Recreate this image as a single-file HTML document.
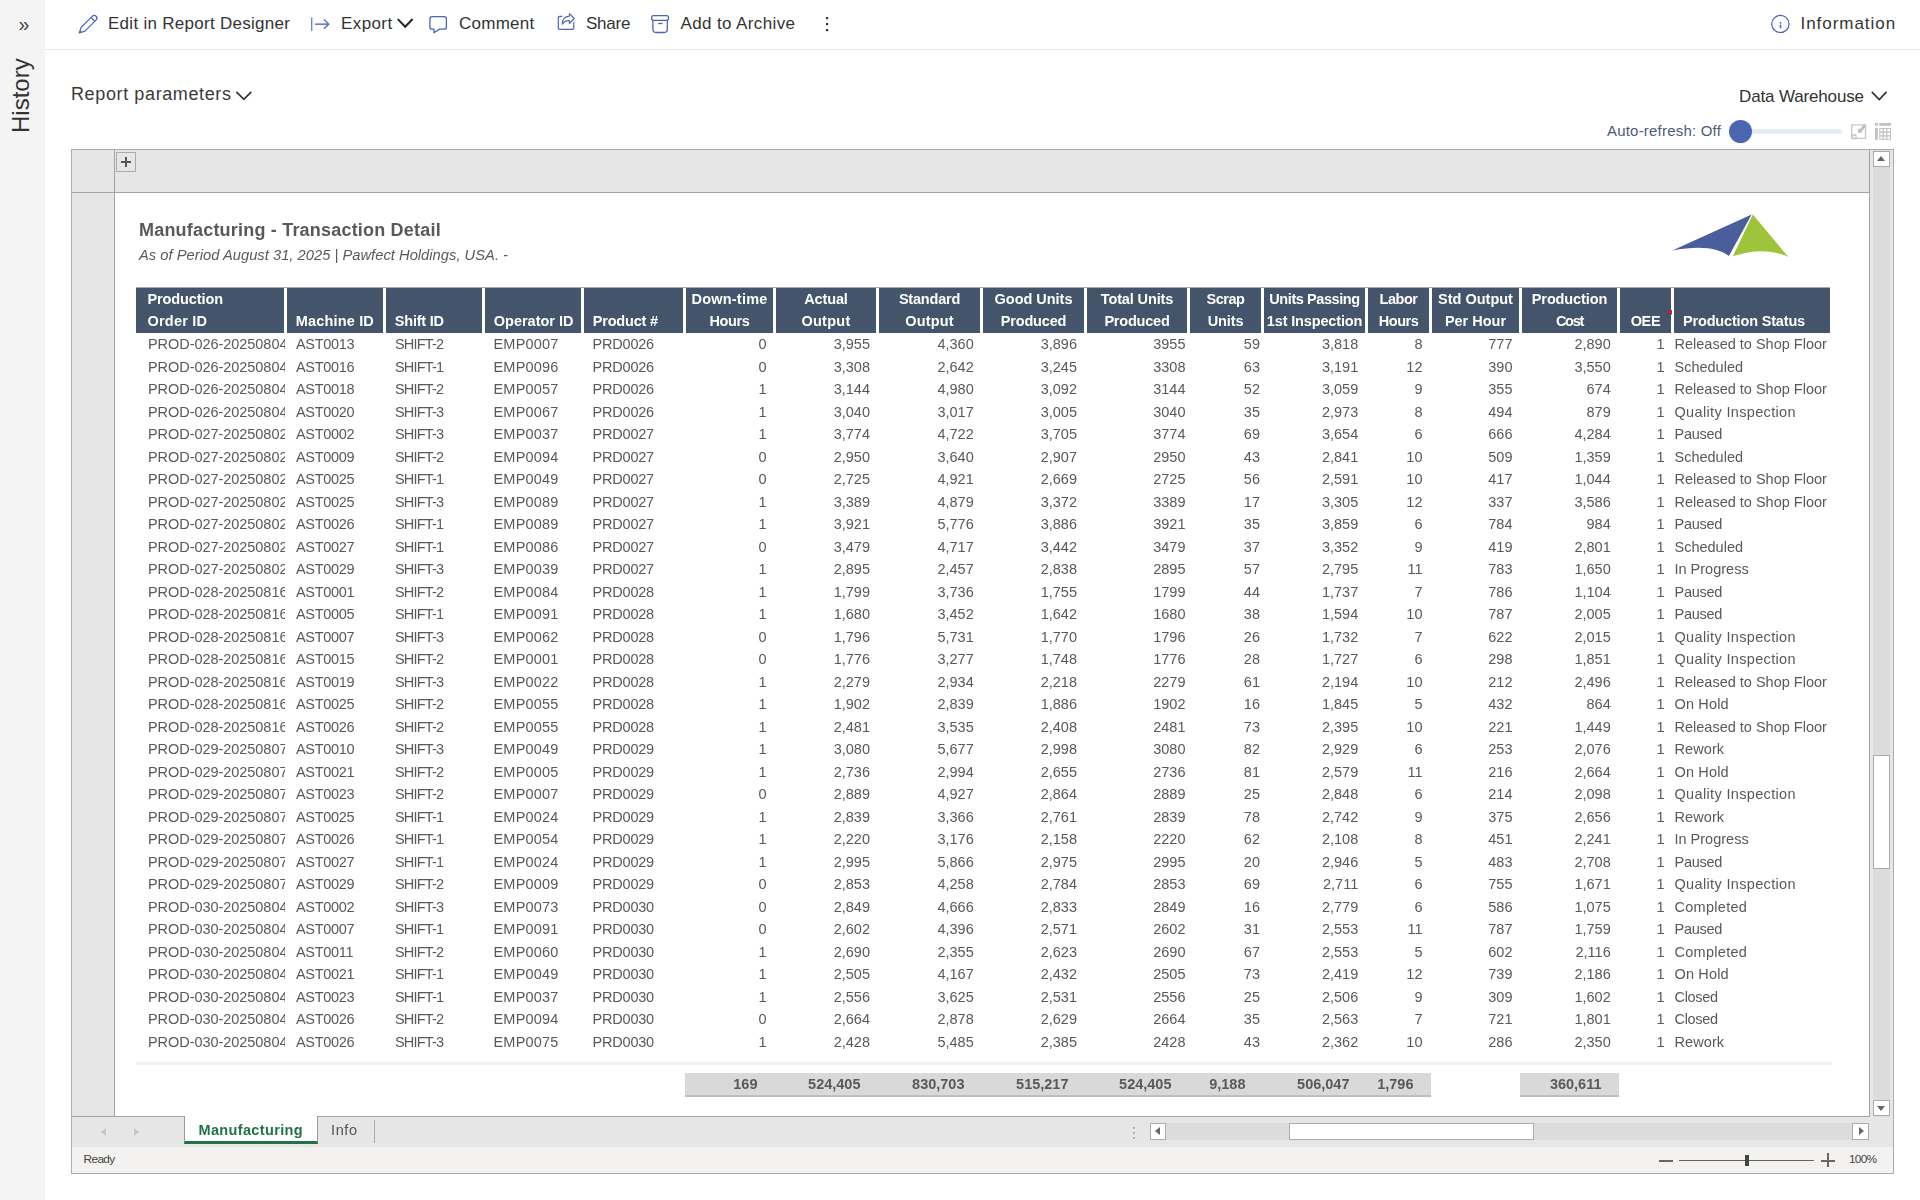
<!DOCTYPE html>
<html lang="en"><head><meta charset="utf-8"><title>Manufacturing - Transaction Detail</title>
<style>
html,body{margin:0;padding:0}
body{width:1920px;height:1200px;overflow:hidden;background:#fff;position:relative;font-family:"Liberation Sans",sans-serif;color:#333}
.abs,#side,#tb,.tx,.ic,#frame div,#frame span,#frame i,.th,.r,.c,.t,#rule,#tot1,#tot2,#thead,#tbody,#totals,.redtri{position:absolute}
#totals{left:0;top:0}
.tx{white-space:nowrap;line-height:1}
#side{left:0;top:0;width:45px;height:1200px;background:#f4f4f4}
#tbline{position:absolute;left:45px;top:49px;width:1875px;height:1px;background:#e9e9e9}
#hist{position:absolute;left:0;top:0;transform-origin:0 0;transform:translate(7.25px,133px) rotate(-90deg);font-size:24px;line-height:28px;white-space:nowrap;color:#333}
/* spreadsheet frame */
#frame{position:absolute;left:71px;top:149px;width:1823px;height:1025px;background:#e6e6e6}
#sheet{left:44px;top:43px;width:1754px;height:924px;background:#fff}
/* table */
#thead{left:0;top:0}
#thead,#tbody,#totals,.gs,#tab1,#tab2{will-change:transform}
.th{top:288px;height:45px;background:#44546a;color:#fff;font-weight:bold;font-size:14.5px;white-space:nowrap;box-sizing:border-box}
.th span{position:absolute;left:0;right:0;line-height:16px}
.h1{top:2.5px}.h2{top:24.5px}
.hc{text-align:center}
.hl{text-align:left}
.r{left:0;height:22px;width:1920px}
.c{top:0;height:22px;line-height:22px;font-size:14.5px;color:#595959;white-space:nowrap;overflow:hidden}
.t{top:1073px;height:22px;line-height:22px;font-size:14.5px;font-weight:bold;color:#595959;text-align:right;padding-right:15.5px;white-space:nowrap}
#rule{left:136px;top:1062px;width:1696px;height:3px;background:#f2f2f2}
#tot1{left:685px;top:1073px;width:746px;height:22px;background:#d9d9d9;border-bottom:2px solid #bfbfbf}
#tot2{left:1520px;top:1073px;width:99px;height:22px;background:#d9d9d9;border-bottom:2px solid #bfbfbf}
.redtri{left:1667px;top:310px;width:0;height:0;border-top:5px solid #e8112d;border-left:5px solid transparent}
/* frame internals (coords relative to frame at 71,149) */
#frame{border:1px solid #ababab;box-sizing:border-box}
#frame>div,#frame>span,#frame>i{position:absolute}
#sheet{left:43px;top:43px;width:1754px;height:923px;background:#fff}
#rowhdr{left:42px;top:0;width:1px;height:967px;background:#a3a3a3}
#colhdrline{left:0;top:42px;width:1798px;height:1px;background:#a3a3a3}
#corner{left:0;top:966px;width:1798px;height:1px;background:#a3a3a3}
#rline{left:1797px;top:0;width:1px;height:967px;background:#a3a3a3}
#plus{left:44px;top:2px;width:20px;height:20px;border:1px solid #ababab;box-sizing:border-box;background:#e6e6e6}
#plus i{position:absolute;left:4px;top:8px;width:10px;height:2px;background:#555}
#plus b{position:absolute;left:8px;top:4px;width:2px;height:10px;background:#555}
#vsb{left:1801px;top:0;width:17px;height:967px;background:#dcdcdc}
.sbtn{position:absolute;width:17px;height:16px;background:#fff;border:1px solid #ababab;box-sizing:border-box}
#vthumb{position:absolute;left:0;top:605px;width:17px;height:114px;background:#fff;border:1px solid #ababab;box-sizing:border-box}
.tri{position:absolute;width:0;height:0}
.tri.up{left:3px;top:4px;border-left:4.5px solid transparent;border-right:4.5px solid transparent;border-bottom:5px solid #666}
.tri.dn{left:3px;top:5px;border-left:4.5px solid transparent;border-right:4.5px solid transparent;border-top:5px solid #666}
.tri.lf{left:4px;top:3px;border-top:4.5px solid transparent;border-bottom:4.5px solid transparent;border-right:5px solid #666}
.tri.rt{left:6px;top:3px;border-top:4.5px solid transparent;border-bottom:4.5px solid transparent;border-left:5px solid #666}
#tabbar{left:0;top:967px;width:1821px;height:30px;background:#e6e6e6}
#tabbar>*{position:absolute}
.nav{width:0;height:0;top:11px;border-top:4px solid transparent;border-bottom:4px solid transparent}
.navl{left:29px;border-right:5px solid #c6c6c6}
.navr{left:62px;border-left:5px solid #c6c6c6}
#tab1{left:112px;top:-1px;width:134px;height:28px;background:#fff;border-left:1px solid #9b9b9b;border-right:1px solid #9b9b9b;border-bottom:3px solid #217346;box-sizing:border-box}
#tab1 span{position:absolute;left:13.5px;top:5.6px;letter-spacing:.35px;font-size:14.5px;font-weight:bold;color:#217346;line-height:16px;white-space:nowrap}
#tab2{left:258.5px;top:4.6px;letter-spacing:.6px;font-size:14.5px;color:#555;line-height:16px}
#tabsep{left:302px;top:3px;width:1px;height:23px;background:#ababab}
.dot{left:1061px;width:2px;height:2px;background:#b0b0b0}
#hsb{left:1078px;top:6px;width:719px;height:17px;background:#dcdcdc}
#hsb .sbtn{width:17px;height:17px}
#hthumb{position:absolute;left:139px;top:0;width:245px;height:17px;background:#fff;border:1px solid #ababab;box-sizing:border-box}
#status{left:0;top:997px;width:1821px;height:26px;background:#f3f2f1}
#status>*{position:absolute}
#zminus{left:1587px;top:13px;width:14px;height:2px;background:#666}
#zline{left:1607px;top:13px;width:135px;height:1px;background:#666}
#zhandle{left:1673px;top:8px;width:4px;height:11px;background:#444}
#zplusH{left:1749px;top:13px;width:14px;height:2px;background:#666}
#zplusV{left:1755px;top:6px;width:2px;height:14px;background:#666}
#hdtop{position:absolute;left:136px;top:287px;width:1694px;height:1px;background:#a2aab5}

.c0{left:136px;width:137px;padding-left:12px;text-align:left;letter-spacing:-0.05px}
.c1{left:287px;width:87px;padding-left:9px;text-align:left;letter-spacing:-0.3px}
.c2{left:386px;width:87px;padding-left:9px;text-align:left;letter-spacing:-0.8px}
.c3{left:485px;width:87.5px;padding-left:8.5px;text-align:left;letter-spacing:0.2px}
.c4{left:584px;width:90.5px;padding-left:8.5px;text-align:left;letter-spacing:-0.2px}
.c5{left:686px;width:80.5px;padding-right:6.5px;text-align:right}
.c6{left:776px;width:94px;padding-right:6px;text-align:right}
.c7{left:879px;width:94.75px;padding-right:6.25px;text-align:right}
.c8{left:983px;width:94px;padding-right:7px;text-align:right}
.c9{left:1087px;width:98.5px;padding-right:1.5px;text-align:right}
.c10{left:1190px;width:70px;padding-right:1px;text-align:right}
.c11{left:1264px;width:94.25px;padding-right:6.75px;text-align:right}
.c12{left:1368px;width:54.5px;padding-right:6.5px;text-align:right}
.c13{left:1432px;width:80.5px;padding-right:6.5px;text-align:right}
.c14{left:1522px;width:88.75px;padding-right:6.25px;text-align:right}
.c15{left:1620px;width:44.5px;padding-right:6.5px;text-align:right}
.c16{left:1674px;width:155.5px;padding-left:0.5px;text-align:left}
</style></head>
<body>

<div id="side"><span class="tx" style="left:18.5px;top:14.5px;font-size:19.5px;color:#444">»</span><div id="hist">History</div></div>
<div id="tbline"></div>
<span class="tx" style="left:108px;top:15px;font-size:17px;letter-spacing:.28px">Edit in Report Designer</span>
<span class="tx" style="left:341px;top:15px;font-size:17px;letter-spacing:.4px">Export</span>
<span class="tx" style="left:459px;top:15px;font-size:17px;letter-spacing:.25px">Comment</span>
<span class="tx" style="left:586px;top:15px;font-size:17px;letter-spacing:-.25px">Share</span>
<span class="tx" style="left:680.5px;top:15px;font-size:17px;letter-spacing:.38px">Add to Archive</span>
<span class="tx" style="left:1800.5px;top:15px;font-size:17px;letter-spacing:.96px">Information</span>
<span class="tx" style="left:71px;top:85px;font-size:18px;letter-spacing:.62px;color:#3a3a3a">Report parameters</span>
<span class="tx" style="left:1739px;top:88px;font-size:17px;letter-spacing:-.15px">Data Warehouse</span>
<span class="tx" style="left:1607px;top:122.5px;font-size:15px;letter-spacing:.2px;color:#4f5b7a">Auto-refresh: Off</span>
<div class="abs" style="position:absolute;left:1752px;top:129px;width:90px;height:5px;background:#e3ecf7;border-radius:0 3px 3px 0"></div>
<div class="abs" style="position:absolute;left:1729px;top:120px;width:23px;height:23px;border-radius:50%;background:#4a66b0"></div>
<div id="frame">
 <div id="sheet"></div>
 <div id="rowhdr"></div>
 <div id="colhdrline"></div>
 <div id="corner"></div>
 <div id="rline"></div>
 <div id="plus"><i></i><b></b></div>
 <div id="vsb"><div class="sbtn" style="left:0;top:1px"><i class="tri up"></i></div><div id="vthumb"></div><div class="sbtn" style="left:0;top:950px"><i class="tri dn"></i></div></div>
 <div id="tabbar">
  <i class="nav navl"></i><i class="nav navr"></i>
  <div id="tab1"><span>Manufacturing</span></div>
  <span id="tab2">Info</span><i id="tabsep"></i>
  <i class="dot" style="top:10px"></i><i class="dot" style="top:15px"></i><i class="dot" style="top:20px"></i>
  <div id="hsb"><div class="sbtn" style="left:0;top:0;width:16px"><i class="tri lf"></i></div><div id="hthumb"></div><div class="sbtn" style="left:702px;top:0"><i class="tri rt"></i></div></div>
 </div>
 <div id="status"><span class="tx" style="left:11.5px;top:7px;font-size:11.8px;letter-spacing:-.6px;color:#444">Ready</span>
  <i id="zminus"></i><i id="zline"></i><i id="zhandle"></i><i id="zplusH"></i><i id="zplusV"></i>
  <span class="tx" style="left:1777px;top:7px;font-size:11.8px;letter-spacing:-.7px;color:#444">100%</span>
 </div>
</div>
<span class="tx gs" style="left:138.6px;top:220.5px;font-size:18px;letter-spacing:.2px;font-weight:bold;color:#595959">Manufacturing - Transaction Detail</span>
<span class="tx gs" style="left:139px;top:247.5px;font-size:14.7px;letter-spacing:.03px;font-style:italic;color:#595959">As of Period August 31, 2025 | Pawfect Holdings, USA. -</span>

<svg id="icons" width="1920" height="1200" viewBox="0 0 1920 1200" style="position:absolute;left:0;top:0;pointer-events:none" fill="none" stroke-linecap="butt" stroke-linejoin="round">
 <!-- pencil -->
 <g stroke="#4a66b8" stroke-width="1.25">
  <path d="M79.3 32.8 L81.3 27.1 L92.5 16.1 A2.7 2.7 0 0 1 96.3 19.9 L84.9 31.1 Z"/>
  <path d="M91 17.5 L94.8 21.3"/>
  <path d="M79.5 32.6 L80.2 30.6 L81.6 32 Z" fill="#4a66b8" stroke="none"/>
 </g>
 <!-- export -->
 <g stroke="#4a66b8" stroke-width="1.35">
  <path d="M311.7 17.4 V30.8" stroke="#6a82c4"/>
  <path d="M314.9 24.15 H328.4"/>
  <path d="M324 19.4 L328.7 24.15 L324 28.8" stroke-linejoin="miter"/>
 </g>
 <!-- chevrons -->
 <path d="M397.8 19.1 L405.2 26.7 L412.6 19" stroke="#222" stroke-width="2" stroke-linejoin="miter"/>
 <path d="M236.4 91.9 L243.8 99.4 L251.3 91.8" stroke="#333" stroke-width="1.7" stroke-linejoin="miter"/>
 <path d="M1871.8 91.9 L1879.3 99.5 L1886.5 91.9" stroke="#333" stroke-width="1.7" stroke-linejoin="miter"/>
 <!-- comment -->
 <path d="M432.1 16.7 H444.2 A2.2 2.2 0 0 1 446.4 18.9 V26.9 A2.2 2.2 0 0 1 444.2 29.1 H439.6 L433.9 32.7 V29.1 H432.1 A2.2 2.2 0 0 1 429.9 26.9 V18.9 A2.2 2.2 0 0 1 432.1 16.7 Z" stroke="#4a66b8" stroke-width="1.3"/>
 <!-- share -->
 <g stroke="#4a66b8" stroke-width="1.2">
  <path d="M562.3 16.4 H559.6 A1.3 1.3 0 0 0 558.3 17.7 V28.1 A1.3 1.3 0 0 0 559.6 29.4 H572.5 A1.3 1.3 0 0 0 573.8 28.1 V22.2"/>
  <path d="M569.4 13.7 L574.3 18.5 L569.4 23.5 V20.6 C566 20.4 563.8 21.6 562.3 24.2 C562.3 19.6 565 16.4 569.4 16.1 Z" stroke-width="1.1"/>
 </g>
 <!-- archive -->
 <g stroke="#4a66b8" stroke-width="1.3">
  <rect x="651.6" y="15.7" width="16.9" height="4.6" rx="2"/>
  <path d="M652.9 20.3 V29.3 A3.2 3.2 0 0 0 656.1 32.5 H664.1 A3.2 3.2 0 0 0 667.3 29.3 V20.3"/>
  <path d="M658.2 23.5 H662.6"/>
 </g>
 <!-- more -->
 <g fill="#333" stroke="none"><rect x="826" y="17" width="2.2" height="2.2"/><rect x="826" y="23" width="2.2" height="2.2"/><rect x="826" y="29" width="2.2" height="2.2"/></g>
 <!-- info -->
 <circle cx="1780.4" cy="23.9" r="8.6" stroke="#4a66b8" stroke-width="1.2"/>
 <g fill="#4a66b8" stroke="none"><rect x="1779.8" y="22.1" width="1.5" height="1.6"/><rect x="1779.8" y="24.6" width="1.5" height="3.6"/></g>
 <!-- shrink icon -->
 <g stroke="#c6c6c6" stroke-width="1.3">
  <rect x="1851.8" y="124.8" width="13.8" height="13.6"/>
  <rect x="1852.5" y="135" width="3.5" height="3.5" fill="#fff"/>
  <path d="M1856.8 134.2 H1858" stroke="#fff" stroke-width="2"/>
 </g>
 <path d="M1858 128 L1858 132.8 L1862.8 132.8 L1861.4 131.4 L1865.6 127.2 L1865.6 124.9 L1863.4 124.9 L1859.4 129.4 Z" fill="#c0c0c0" stroke="none"/>
 <!-- table icon -->
 <g fill="#c0c0c0" stroke="none">
  <rect x="1875" y="123" width="2.8" height="2.8"/><rect x="1875" y="127.9" width="2.8" height="11.9"/>
  <rect x="1879.3" y="123" width="11.7" height="2.8"/>
  <path fill-rule="evenodd" d="M1879.3 127.9 H1891 V139.8 H1879.3 Z M1880.3 128.9 V131.6 H1882.6 V128.9 Z M1883.8 128.9 V131.6 H1886.2 V128.9 Z M1887.4 128.9 V131.6 H1890 V128.9 Z M1880.3 132.7 V135.3 H1882.6 V132.7 Z M1883.8 132.7 V135.3 H1886.2 V132.7 Z M1887.4 132.7 V135.3 H1890 V132.7 Z M1880.3 136.4 V138.8 H1882.6 V136.4 Z M1883.8 136.4 V138.8 H1886.2 V136.4 Z M1887.4 136.4 V138.8 H1890 V136.4 Z"/>
 </g>
 <!-- logo -->
 <path d="M1672.3 250.6 L1751.6 214.4 L1728.9 256 C1719 248 1700 245 1672.3 250.6 Z" fill="#4a5e9c" stroke="none"/>
 <path d="M1752.8 214.6 L1788.3 256.9 C1772 249.5 1752 249.5 1732.8 256.4 Z" fill="#9dc43a" stroke="none"/>
</svg>

<div id="thead"><div id="hdtop"></div>
<div class="th hl" style="left:136px;width:148px"><span class="h1" style="padding-left:11.5px;letter-spacing:-0.11px">Production</span><span class="h2" style="padding-left:11.5px;letter-spacing:0.2px">Order ID</span></div>
<div class="th hl" style="left:287px;width:96px"><span class="h2" style="padding-left:8.75px;letter-spacing:0.17px">Machine ID</span></div>
<div class="th hl" style="left:386px;width:96px"><span class="h2" style="padding-left:8.75px;letter-spacing:-0.2px">Shift ID</span></div>
<div class="th hl" style="left:485px;width:96px"><span class="h2" style="padding-left:8.75px">Operator ID</span></div>
<div class="th hl" style="left:584px;width:99px"><span class="h2" style="padding-left:8.75px;letter-spacing:-0.19px">Product #</span></div>
<div class="th hc" style="left:686px;width:87px"><span class="h1" style="letter-spacing:0.22px">Down-time</span><span class="h2" style="letter-spacing:-0.38px">Hours</span></div>
<div class="th hc" style="left:776px;width:100px"><span class="h1" style="letter-spacing:-0.15px">Actual</span><span class="h2" style="letter-spacing:0.25px">Output</span></div>
<div class="th hc" style="left:879px;width:101px"><span class="h1" style="letter-spacing:-0.21px">Standard</span><span class="h2" style="letter-spacing:0.15px">Output</span></div>
<div class="th hc" style="left:983px;width:101px"><span class="h1" style="letter-spacing:-0.02px">Good Units</span><span class="h2" style="letter-spacing:-0.16px">Produced</span></div>
<div class="th hc" style="left:1087px;width:100px"><span class="h1" style="letter-spacing:-0.12px">Total Units</span><span class="h2" style="letter-spacing:-0.21px">Produced</span></div>
<div class="th hc" style="left:1190px;width:71px"><span class="h1" style="letter-spacing:-0.5px">Scrap</span><span class="h2" style="letter-spacing:-0.12px">Units</span></div>
<div class="th hc" style="left:1264px;width:101px"><span class="h1" style="letter-spacing:-0.42px">Units Passing</span><span class="h2" style="letter-spacing:-0.15px">1st Inspection</span></div>
<div class="th hc" style="left:1368px;width:61px"><span class="h1" style="letter-spacing:-0.5px">Labor</span><span class="h2" style="letter-spacing:-0.5px">Hours</span></div>
<div class="th hc" style="left:1432px;width:87px"><span class="h1">Std Output</span><span class="h2">Per Hour</span></div>
<div class="th hc" style="left:1522px;width:95px"><span class="h1" style="letter-spacing:-0.11px">Production</span><span class="h2" style="letter-spacing:-1.25px">Cost</span></div>
<div class="th hc" style="left:1620px;width:51px"><span class="h2" style="letter-spacing:-0.3px">OEE</span></div>
<div class="th hl" style="left:1674px;width:156px"><span class="h2" style="padding-left:9px;letter-spacing:-0.17px">Production Status</span></div>
<i class="redtri"></i></div>

<div id="tbody">
<div class="r" style="top:333px"><span class="c c0">PROD-026-20250804</span><span class="c c1">AST0013</span><span class="c c2">SHIFT-2</span><span class="c c3">EMP0007</span><span class="c c4">PRD0026</span><span class="c c5">0</span><span class="c c6">3,955</span><span class="c c7">4,360</span><span class="c c8">3,896</span><span class="c c9">3955</span><span class="c c10">59</span><span class="c c11">3,818</span><span class="c c12">8</span><span class="c c13">777</span><span class="c c14">2,890</span><span class="c c15">1</span><span class="c c16">Released to Shop Floor</span></div>
<div class="r" style="top:356px"><span class="c c0">PROD-026-20250804</span><span class="c c1">AST0016</span><span class="c c2">SHIFT-1</span><span class="c c3">EMP0096</span><span class="c c4">PRD0026</span><span class="c c5">0</span><span class="c c6">3,308</span><span class="c c7">2,642</span><span class="c c8">3,245</span><span class="c c9">3308</span><span class="c c10">63</span><span class="c c11">3,191</span><span class="c c12">12</span><span class="c c13">390</span><span class="c c14">3,550</span><span class="c c15">1</span><span class="c c16">Scheduled</span></div>
<div class="r" style="top:378px"><span class="c c0">PROD-026-20250804</span><span class="c c1">AST0018</span><span class="c c2">SHIFT-2</span><span class="c c3">EMP0057</span><span class="c c4">PRD0026</span><span class="c c5">1</span><span class="c c6">3,144</span><span class="c c7">4,980</span><span class="c c8">3,092</span><span class="c c9">3144</span><span class="c c10">52</span><span class="c c11">3,059</span><span class="c c12">9</span><span class="c c13">355</span><span class="c c14">674</span><span class="c c15">1</span><span class="c c16">Released to Shop Floor</span></div>
<div class="r" style="top:401px"><span class="c c0">PROD-026-20250804</span><span class="c c1">AST0020</span><span class="c c2">SHIFT-3</span><span class="c c3">EMP0067</span><span class="c c4">PRD0026</span><span class="c c5">1</span><span class="c c6">3,040</span><span class="c c7">3,017</span><span class="c c8">3,005</span><span class="c c9">3040</span><span class="c c10">35</span><span class="c c11">2,973</span><span class="c c12">8</span><span class="c c13">494</span><span class="c c14">879</span><span class="c c15">1</span><span class="c c16" style="letter-spacing:0.34px">Quality Inspection</span></div>
<div class="r" style="top:423px"><span class="c c0">PROD-027-20250802</span><span class="c c1">AST0002</span><span class="c c2">SHIFT-3</span><span class="c c3">EMP0037</span><span class="c c4">PRD0027</span><span class="c c5">1</span><span class="c c6">3,774</span><span class="c c7">4,722</span><span class="c c8">3,705</span><span class="c c9">3774</span><span class="c c10">69</span><span class="c c11">3,654</span><span class="c c12">6</span><span class="c c13">666</span><span class="c c14">4,284</span><span class="c c15">1</span><span class="c c16" style="letter-spacing:-0.26px">Paused</span></div>
<div class="r" style="top:446px"><span class="c c0">PROD-027-20250802</span><span class="c c1">AST0009</span><span class="c c2">SHIFT-2</span><span class="c c3">EMP0094</span><span class="c c4">PRD0027</span><span class="c c5">0</span><span class="c c6">2,950</span><span class="c c7">3,640</span><span class="c c8">2,907</span><span class="c c9">2950</span><span class="c c10">43</span><span class="c c11">2,841</span><span class="c c12">10</span><span class="c c13">509</span><span class="c c14">1,359</span><span class="c c15">1</span><span class="c c16">Scheduled</span></div>
<div class="r" style="top:468px"><span class="c c0">PROD-027-20250802</span><span class="c c1">AST0025</span><span class="c c2">SHIFT-1</span><span class="c c3">EMP0049</span><span class="c c4">PRD0027</span><span class="c c5">0</span><span class="c c6">2,725</span><span class="c c7">4,921</span><span class="c c8">2,669</span><span class="c c9">2725</span><span class="c c10">56</span><span class="c c11">2,591</span><span class="c c12">10</span><span class="c c13">417</span><span class="c c14">1,044</span><span class="c c15">1</span><span class="c c16">Released to Shop Floor</span></div>
<div class="r" style="top:491px"><span class="c c0">PROD-027-20250802</span><span class="c c1">AST0025</span><span class="c c2">SHIFT-3</span><span class="c c3">EMP0089</span><span class="c c4">PRD0027</span><span class="c c5">1</span><span class="c c6">3,389</span><span class="c c7">4,879</span><span class="c c8">3,372</span><span class="c c9">3389</span><span class="c c10">17</span><span class="c c11">3,305</span><span class="c c12">12</span><span class="c c13">337</span><span class="c c14">3,586</span><span class="c c15">1</span><span class="c c16">Released to Shop Floor</span></div>
<div class="r" style="top:513px"><span class="c c0">PROD-027-20250802</span><span class="c c1">AST0026</span><span class="c c2">SHIFT-1</span><span class="c c3">EMP0089</span><span class="c c4">PRD0027</span><span class="c c5">1</span><span class="c c6">3,921</span><span class="c c7">5,776</span><span class="c c8">3,886</span><span class="c c9">3921</span><span class="c c10">35</span><span class="c c11">3,859</span><span class="c c12">6</span><span class="c c13">784</span><span class="c c14">984</span><span class="c c15">1</span><span class="c c16" style="letter-spacing:-0.26px">Paused</span></div>
<div class="r" style="top:536px"><span class="c c0">PROD-027-20250802</span><span class="c c1">AST0027</span><span class="c c2">SHIFT-1</span><span class="c c3">EMP0086</span><span class="c c4">PRD0027</span><span class="c c5">0</span><span class="c c6">3,479</span><span class="c c7">4,717</span><span class="c c8">3,442</span><span class="c c9">3479</span><span class="c c10">37</span><span class="c c11">3,352</span><span class="c c12">9</span><span class="c c13">419</span><span class="c c14">2,801</span><span class="c c15">1</span><span class="c c16">Scheduled</span></div>
<div class="r" style="top:558px"><span class="c c0">PROD-027-20250802</span><span class="c c1">AST0029</span><span class="c c2">SHIFT-3</span><span class="c c3">EMP0039</span><span class="c c4">PRD0027</span><span class="c c5">1</span><span class="c c6">2,895</span><span class="c c7">2,457</span><span class="c c8">2,838</span><span class="c c9">2895</span><span class="c c10">57</span><span class="c c11">2,795</span><span class="c c12">11</span><span class="c c13">783</span><span class="c c14">1,650</span><span class="c c15">1</span><span class="c c16">In Progress</span></div>
<div class="r" style="top:581px"><span class="c c0">PROD-028-20250816</span><span class="c c1">AST0001</span><span class="c c2">SHIFT-2</span><span class="c c3">EMP0084</span><span class="c c4">PRD0028</span><span class="c c5">1</span><span class="c c6">1,799</span><span class="c c7">3,736</span><span class="c c8">1,755</span><span class="c c9">1799</span><span class="c c10">44</span><span class="c c11">1,737</span><span class="c c12">7</span><span class="c c13">786</span><span class="c c14">1,104</span><span class="c c15">1</span><span class="c c16" style="letter-spacing:-0.26px">Paused</span></div>
<div class="r" style="top:603px"><span class="c c0">PROD-028-20250816</span><span class="c c1">AST0005</span><span class="c c2">SHIFT-1</span><span class="c c3">EMP0091</span><span class="c c4">PRD0028</span><span class="c c5">1</span><span class="c c6">1,680</span><span class="c c7">3,452</span><span class="c c8">1,642</span><span class="c c9">1680</span><span class="c c10">38</span><span class="c c11">1,594</span><span class="c c12">10</span><span class="c c13">787</span><span class="c c14">2,005</span><span class="c c15">1</span><span class="c c16" style="letter-spacing:-0.26px">Paused</span></div>
<div class="r" style="top:626px"><span class="c c0">PROD-028-20250816</span><span class="c c1">AST0007</span><span class="c c2">SHIFT-3</span><span class="c c3">EMP0062</span><span class="c c4">PRD0028</span><span class="c c5">0</span><span class="c c6">1,796</span><span class="c c7">5,731</span><span class="c c8">1,770</span><span class="c c9">1796</span><span class="c c10">26</span><span class="c c11">1,732</span><span class="c c12">7</span><span class="c c13">622</span><span class="c c14">2,015</span><span class="c c15">1</span><span class="c c16" style="letter-spacing:0.34px">Quality Inspection</span></div>
<div class="r" style="top:648px"><span class="c c0">PROD-028-20250816</span><span class="c c1">AST0015</span><span class="c c2">SHIFT-2</span><span class="c c3">EMP0001</span><span class="c c4">PRD0028</span><span class="c c5">0</span><span class="c c6">1,776</span><span class="c c7">3,277</span><span class="c c8">1,748</span><span class="c c9">1776</span><span class="c c10">28</span><span class="c c11">1,727</span><span class="c c12">6</span><span class="c c13">298</span><span class="c c14">1,851</span><span class="c c15">1</span><span class="c c16" style="letter-spacing:0.34px">Quality Inspection</span></div>
<div class="r" style="top:671px"><span class="c c0">PROD-028-20250816</span><span class="c c1">AST0019</span><span class="c c2">SHIFT-3</span><span class="c c3">EMP0022</span><span class="c c4">PRD0028</span><span class="c c5">1</span><span class="c c6">2,279</span><span class="c c7">2,934</span><span class="c c8">2,218</span><span class="c c9">2279</span><span class="c c10">61</span><span class="c c11">2,194</span><span class="c c12">10</span><span class="c c13">212</span><span class="c c14">2,496</span><span class="c c15">1</span><span class="c c16">Released to Shop Floor</span></div>
<div class="r" style="top:693px"><span class="c c0">PROD-028-20250816</span><span class="c c1">AST0025</span><span class="c c2">SHIFT-2</span><span class="c c3">EMP0055</span><span class="c c4">PRD0028</span><span class="c c5">1</span><span class="c c6">1,902</span><span class="c c7">2,839</span><span class="c c8">1,886</span><span class="c c9">1902</span><span class="c c10">16</span><span class="c c11">1,845</span><span class="c c12">5</span><span class="c c13">432</span><span class="c c14">864</span><span class="c c15">1</span><span class="c c16" style="letter-spacing:0.15px">On Hold</span></div>
<div class="r" style="top:716px"><span class="c c0">PROD-028-20250816</span><span class="c c1">AST0026</span><span class="c c2">SHIFT-2</span><span class="c c3">EMP0055</span><span class="c c4">PRD0028</span><span class="c c5">1</span><span class="c c6">2,481</span><span class="c c7">3,535</span><span class="c c8">2,408</span><span class="c c9">2481</span><span class="c c10">73</span><span class="c c11">2,395</span><span class="c c12">10</span><span class="c c13">221</span><span class="c c14">1,449</span><span class="c c15">1</span><span class="c c16">Released to Shop Floor</span></div>
<div class="r" style="top:738px"><span class="c c0">PROD-029-20250807</span><span class="c c1">AST0010</span><span class="c c2">SHIFT-3</span><span class="c c3">EMP0049</span><span class="c c4">PRD0029</span><span class="c c5">1</span><span class="c c6">3,080</span><span class="c c7">5,677</span><span class="c c8">2,998</span><span class="c c9">3080</span><span class="c c10">82</span><span class="c c11">2,929</span><span class="c c12">6</span><span class="c c13">253</span><span class="c c14">2,076</span><span class="c c15">1</span><span class="c c16" style="letter-spacing:0.08px">Rework</span></div>
<div class="r" style="top:761px"><span class="c c0">PROD-029-20250807</span><span class="c c1">AST0021</span><span class="c c2">SHIFT-2</span><span class="c c3">EMP0005</span><span class="c c4">PRD0029</span><span class="c c5">1</span><span class="c c6">2,736</span><span class="c c7">2,994</span><span class="c c8">2,655</span><span class="c c9">2736</span><span class="c c10">81</span><span class="c c11">2,579</span><span class="c c12">11</span><span class="c c13">216</span><span class="c c14">2,664</span><span class="c c15">1</span><span class="c c16" style="letter-spacing:0.15px">On Hold</span></div>
<div class="r" style="top:783px"><span class="c c0">PROD-029-20250807</span><span class="c c1">AST0023</span><span class="c c2">SHIFT-2</span><span class="c c3">EMP0007</span><span class="c c4">PRD0029</span><span class="c c5">0</span><span class="c c6">2,889</span><span class="c c7">4,927</span><span class="c c8">2,864</span><span class="c c9">2889</span><span class="c c10">25</span><span class="c c11">2,848</span><span class="c c12">6</span><span class="c c13">214</span><span class="c c14">2,098</span><span class="c c15">1</span><span class="c c16" style="letter-spacing:0.34px">Quality Inspection</span></div>
<div class="r" style="top:806px"><span class="c c0">PROD-029-20250807</span><span class="c c1">AST0025</span><span class="c c2">SHIFT-1</span><span class="c c3">EMP0024</span><span class="c c4">PRD0029</span><span class="c c5">1</span><span class="c c6">2,839</span><span class="c c7">3,366</span><span class="c c8">2,761</span><span class="c c9">2839</span><span class="c c10">78</span><span class="c c11">2,742</span><span class="c c12">9</span><span class="c c13">375</span><span class="c c14">2,656</span><span class="c c15">1</span><span class="c c16" style="letter-spacing:0.08px">Rework</span></div>
<div class="r" style="top:828px"><span class="c c0">PROD-029-20250807</span><span class="c c1">AST0026</span><span class="c c2">SHIFT-1</span><span class="c c3">EMP0054</span><span class="c c4">PRD0029</span><span class="c c5">1</span><span class="c c6">2,220</span><span class="c c7">3,176</span><span class="c c8">2,158</span><span class="c c9">2220</span><span class="c c10">62</span><span class="c c11">2,108</span><span class="c c12">8</span><span class="c c13">451</span><span class="c c14">2,241</span><span class="c c15">1</span><span class="c c16">In Progress</span></div>
<div class="r" style="top:851px"><span class="c c0">PROD-029-20250807</span><span class="c c1">AST0027</span><span class="c c2">SHIFT-1</span><span class="c c3">EMP0024</span><span class="c c4">PRD0029</span><span class="c c5">1</span><span class="c c6">2,995</span><span class="c c7">5,866</span><span class="c c8">2,975</span><span class="c c9">2995</span><span class="c c10">20</span><span class="c c11">2,946</span><span class="c c12">5</span><span class="c c13">483</span><span class="c c14">2,708</span><span class="c c15">1</span><span class="c c16" style="letter-spacing:-0.26px">Paused</span></div>
<div class="r" style="top:873px"><span class="c c0">PROD-029-20250807</span><span class="c c1">AST0029</span><span class="c c2">SHIFT-2</span><span class="c c3">EMP0009</span><span class="c c4">PRD0029</span><span class="c c5">0</span><span class="c c6">2,853</span><span class="c c7">4,258</span><span class="c c8">2,784</span><span class="c c9">2853</span><span class="c c10">69</span><span class="c c11">2,711</span><span class="c c12">6</span><span class="c c13">755</span><span class="c c14">1,671</span><span class="c c15">1</span><span class="c c16" style="letter-spacing:0.34px">Quality Inspection</span></div>
<div class="r" style="top:896px"><span class="c c0">PROD-030-20250804</span><span class="c c1">AST0002</span><span class="c c2">SHIFT-3</span><span class="c c3">EMP0073</span><span class="c c4">PRD0030</span><span class="c c5">0</span><span class="c c6">2,849</span><span class="c c7">4,666</span><span class="c c8">2,833</span><span class="c c9">2849</span><span class="c c10">16</span><span class="c c11">2,779</span><span class="c c12">6</span><span class="c c13">586</span><span class="c c14">1,075</span><span class="c c15">1</span><span class="c c16" style="letter-spacing:0.28px">Completed</span></div>
<div class="r" style="top:918px"><span class="c c0">PROD-030-20250804</span><span class="c c1">AST0007</span><span class="c c2">SHIFT-1</span><span class="c c3">EMP0091</span><span class="c c4">PRD0030</span><span class="c c5">0</span><span class="c c6">2,602</span><span class="c c7">4,396</span><span class="c c8">2,571</span><span class="c c9">2602</span><span class="c c10">31</span><span class="c c11">2,553</span><span class="c c12">11</span><span class="c c13">787</span><span class="c c14">1,759</span><span class="c c15">1</span><span class="c c16" style="letter-spacing:-0.26px">Paused</span></div>
<div class="r" style="top:941px"><span class="c c0">PROD-030-20250804</span><span class="c c1">AST0011</span><span class="c c2">SHIFT-2</span><span class="c c3">EMP0060</span><span class="c c4">PRD0030</span><span class="c c5">1</span><span class="c c6">2,690</span><span class="c c7">2,355</span><span class="c c8">2,623</span><span class="c c9">2690</span><span class="c c10">67</span><span class="c c11">2,553</span><span class="c c12">5</span><span class="c c13">602</span><span class="c c14">2,116</span><span class="c c15">1</span><span class="c c16" style="letter-spacing:0.28px">Completed</span></div>
<div class="r" style="top:963px"><span class="c c0">PROD-030-20250804</span><span class="c c1">AST0021</span><span class="c c2">SHIFT-1</span><span class="c c3">EMP0049</span><span class="c c4">PRD0030</span><span class="c c5">1</span><span class="c c6">2,505</span><span class="c c7">4,167</span><span class="c c8">2,432</span><span class="c c9">2505</span><span class="c c10">73</span><span class="c c11">2,419</span><span class="c c12">12</span><span class="c c13">739</span><span class="c c14">2,186</span><span class="c c15">1</span><span class="c c16" style="letter-spacing:0.15px">On Hold</span></div>
<div class="r" style="top:986px"><span class="c c0">PROD-030-20250804</span><span class="c c1">AST0023</span><span class="c c2">SHIFT-1</span><span class="c c3">EMP0037</span><span class="c c4">PRD0030</span><span class="c c5">1</span><span class="c c6">2,556</span><span class="c c7">3,625</span><span class="c c8">2,531</span><span class="c c9">2556</span><span class="c c10">25</span><span class="c c11">2,506</span><span class="c c12">9</span><span class="c c13">309</span><span class="c c14">1,602</span><span class="c c15">1</span><span class="c c16" style="letter-spacing:-0.3px">Closed</span></div>
<div class="r" style="top:1008px"><span class="c c0">PROD-030-20250804</span><span class="c c1">AST0026</span><span class="c c2">SHIFT-2</span><span class="c c3">EMP0094</span><span class="c c4">PRD0030</span><span class="c c5">0</span><span class="c c6">2,664</span><span class="c c7">2,878</span><span class="c c8">2,629</span><span class="c c9">2664</span><span class="c c10">35</span><span class="c c11">2,563</span><span class="c c12">7</span><span class="c c13">721</span><span class="c c14">1,801</span><span class="c c15">1</span><span class="c c16" style="letter-spacing:-0.3px">Closed</span></div>
<div class="r" style="top:1031px"><span class="c c0">PROD-030-20250804</span><span class="c c1">AST0026</span><span class="c c2">SHIFT-3</span><span class="c c3">EMP0075</span><span class="c c4">PRD0030</span><span class="c c5">1</span><span class="c c6">2,428</span><span class="c c7">5,485</span><span class="c c8">2,385</span><span class="c c9">2428</span><span class="c c10">43</span><span class="c c11">2,362</span><span class="c c12">10</span><span class="c c13">286</span><span class="c c14">2,350</span><span class="c c15">1</span><span class="c c16" style="letter-spacing:0.08px">Rework</span></div>
</div>

<div id="rule"></div>
<div id="totals"><div id="tot1"></div><div id="tot2"></div>
<span class="t" style="left:686px;width:71.5px">169</span>
<span class="t" style="left:776px;width:84.5px">524,405</span>
<span class="t" style="left:879px;width:85.5px">830,703</span>
<span class="t" style="left:983px;width:85.5px">515,217</span>
<span class="t" style="left:1087px;width:84.5px">524,405</span>
<span class="t" style="left:1190px;width:55.5px">9,188</span>
<span class="t" style="left:1264px;width:85.5px">506,047</span>
<span class="t" style="left:1368px;width:45.5px">1,796</span>
<span class="t" style="left:1522px;width:79.5px">360,611</span>
</div>
</body></html>
